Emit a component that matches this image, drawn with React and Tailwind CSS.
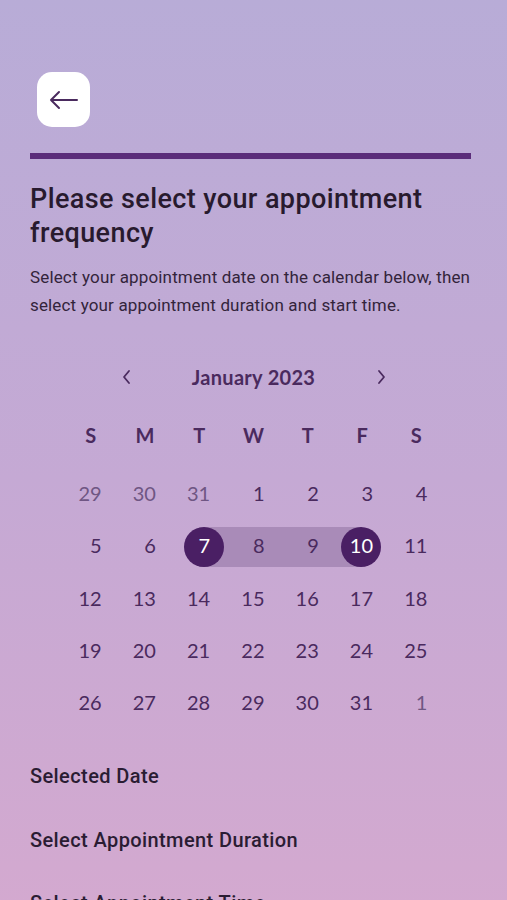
import React from "react";

const weeks = [
  [[29, true], [30, true], [31, true], [1], [2], [3], [4]],
  [[5], [6], [7], [8], [9], [10], [11]],
  [[12], [13], [14], [15], [16], [17], [18]],
  [[19], [20], [21], [22], [23], [24], [25]],
  [[26], [27], [28], [29], [30], [31], [1, true]],
];

function Cell({ day, muted, row, col }) {
  const selected = row === 1 && (day === 7 || day === 10);
  let band = null;
  if (row === 1 && col === 2) band = "left-1/2 right-0";
  if (row === 1 && (col === 3 || col === 4)) band = "left-0 right-0";
  if (row === 1 && col === 5) band = "left-0 right-1/2";
  return (
    <div className="relative flex h-[52.25px] items-center justify-center">
      {band && (
        <div className={`absolute top-1/2 h-[40px] -translate-y-1/2 bg-[#a98bb8] ${band}`} />
      )}
      <div className="relative flex w-[22px] justify-end">
        <span className="relative">
          {selected && (
            <span className="absolute left-1/2 top-1/2 h-[40px] w-[40px] -translate-x-1/2 -translate-y-1/2 rounded-full bg-[#4a1f64]" />
          )}
          <span
            className={`relative text-[20px] leading-none ${
              selected ? "text-white" : muted ? "text-[#6f5683]" : "text-[#4a2a5e]"
            }`}
          >
            {day}
          </span>
        </span>
      </div>
    </div>
  );
}

export default function App() {
  return (
    <div
      className="min-h-[900px] w-full bg-gradient-to-b from-[#b8acd7] via-[#c5a9d4] to-[#d5a9cf] px-[30px] pb-10"
      style={{ fontFamily: "Roboto, 'Noto Sans', sans-serif" }}
    >
      <div className="pt-[72px]">
        <button className="ml-[7px] flex h-[55px] w-[53px] items-center justify-center rounded-[15px] bg-white">
          <svg width="30" height="20" viewBox="0 0 30 20" fill="none">
            <path
              d="M28 10H2M10 2L2 10L10 18"
              stroke="#4a2a5e"
              strokeWidth="2"
              strokeLinecap="round"
              strokeLinejoin="round"
            />
          </svg>
        </button>
      </div>

      <div className="mt-[26px] mr-[6px] h-[6px] bg-[#5b2d7a]" />

      <h1 className="mt-[23px] text-[27px] font-medium leading-[34px] tracking-[0.4px] text-[#281a2e]">
        Please select your appointment frequency
      </h1>

      <p className="mt-[13px] text-[17px] leading-[28px] tracking-[0.15px] text-[#33243b]">
        Select your appointment date on the calendar below, then select your appointment duration and start time.
      </p>

      <div style={{ fontFamily: "Lato, 'Open Sans', sans-serif" }}>
        <div className="mx-auto mt-[42px] flex h-[32px] w-[380px] items-center justify-between px-[58px]">
          <svg width="10" height="16" viewBox="0 0 10 16" fill="none">
            <path d="M7 2L2 8L7 14" stroke="#4a2a5e" strokeWidth="1.8" strokeLinecap="round" strokeLinejoin="round" />
          </svg>
          <span className="text-[20px] font-bold tracking-[0.3px] text-[#4a2a5e]">January 2023</span>
          <svg width="10" height="16" viewBox="0 0 10 16" fill="none">
            <path d="M3 2L8 8L3 14" stroke="#4a2a5e" strokeWidth="1.8" strokeLinecap="round" strokeLinejoin="round" />
          </svg>
        </div>

        <div className="mx-auto mt-[22px] grid h-[40px] w-[380px] grid-cols-7 items-center">
          {["S", "M", "T", "W", "T", "F", "S"].map((d, i) => (
            <div key={i} className="text-center text-[20px] font-bold text-[#4a2a5e]">
              {d}
            </div>
          ))}
        </div>

        <div className="mx-auto mt-[14px] w-[380px]">
          {weeks.map((w, r) => (
            <div key={r} className="grid grid-cols-7">
              {w.map(([d, m], c) => (
                <Cell key={c} day={d} muted={!!m} row={r} col={c} />
              ))}
            </div>
          ))}
        </div>
      </div>

      <div className="mt-[32px] flex h-[28px] items-center text-[20px] font-medium tracking-[0.4px] text-[#2a1c33]">
        Selected Date
      </div>
      <div className="mt-[36px] flex h-[28px] items-center text-[20px] font-medium tracking-[0.4px] text-[#2a1c33]">
        Select Appointment Duration
      </div>
      <div className="mt-[35px] flex h-[28px] items-center text-[20px] font-medium tracking-[0.4px] text-[#2a1c33]">
        Select Appointment Time
      </div>
    </div>
  );
}
